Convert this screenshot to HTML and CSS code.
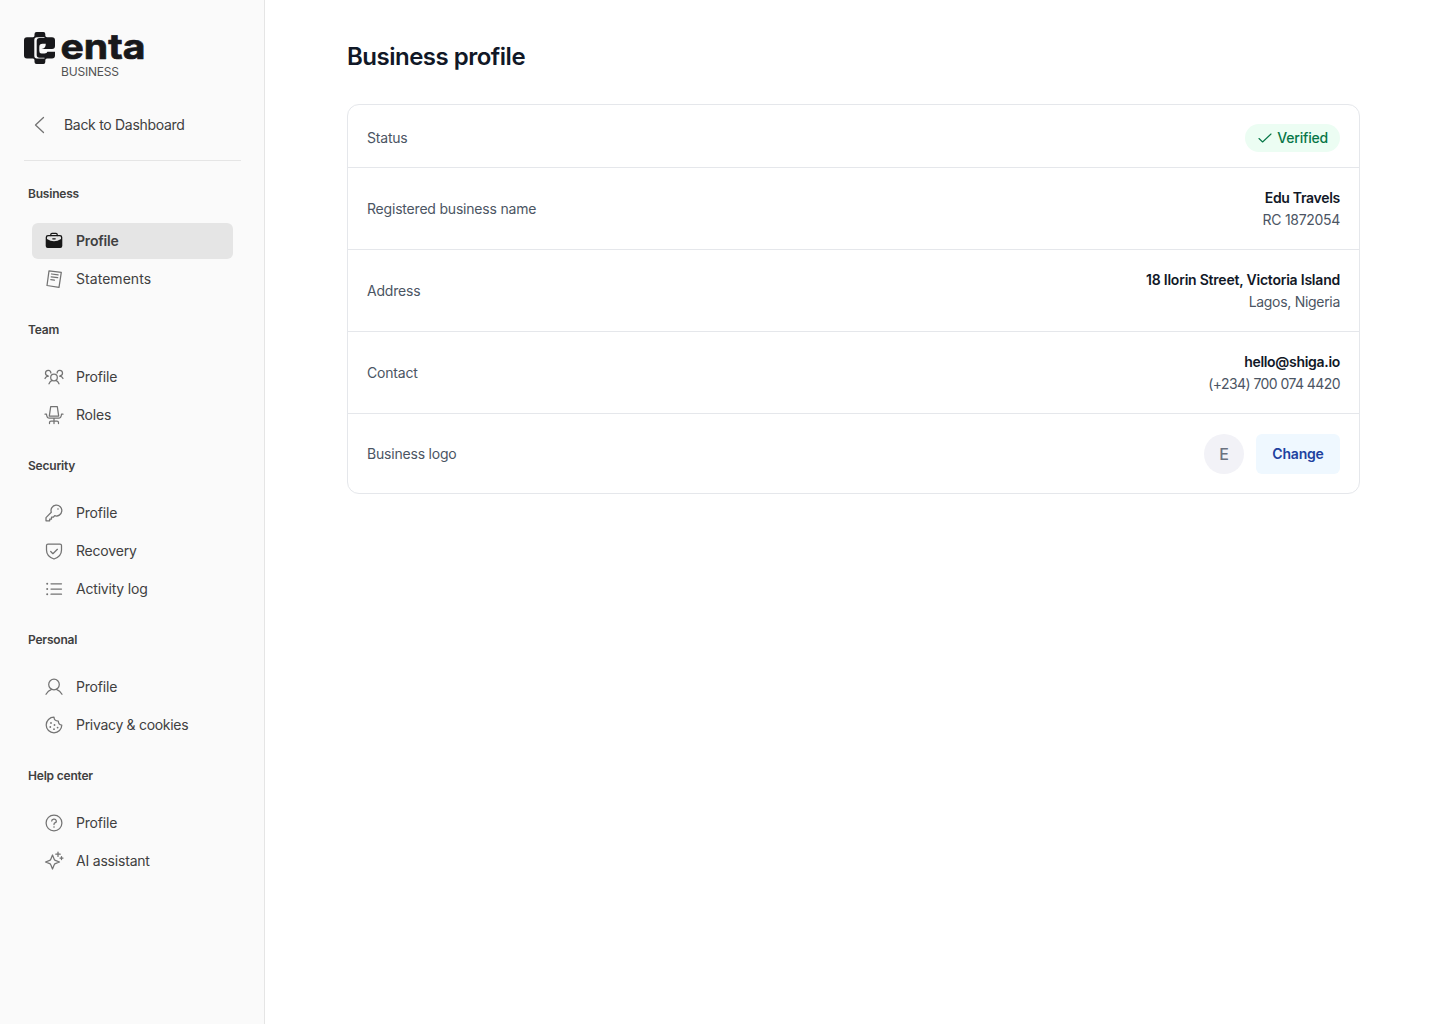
FILE: index.html
```
<!DOCTYPE html>
<html lang="en">
<head>
    <meta charset="UTF-8">
    <meta name="viewport" content="width=device-width, initial-scale=1.0">
    <title>Business profile</title>
    <link rel="stylesheet" href="styles.css">
</head>
<body>

    <div class="layout">
        <!-- Sidebar -->
        <aside class="sidebar">
            <div class="logo">
                <svg width="122" height="34" viewBox="0 0 122 34">
                    <path class="mark" d="M12.500 1H19.500Q21.300 1 21.300 3V4.500Q21.300 6.300 23 6.300H28Q31 6.300 31 9.300V15Q31 18 28 18H19.500V20.500H31V24.500Q31 27.500 28 27.500H23Q21.300 27.500 21.300 29.300V31Q21.300 33 19.500 33H12.500Q10.500 33 10.500 31V29.300Q10.500 27.500 9 27.500H3Q0 27.500 0 24.500V9.300Q0 6.300 3 6.300H9Q10.500 6.300 10.500 4.500V3Q10.500 1 12.500 1Z"/>
                    <path class="mark-hole" d="M20.500 6.300H13Q10.300 6.300 10.300 9V24.800Q10.300 27.500 13 27.500H20.500V26.700H15.500Q12.700 26.700 12.700 24V10Q12.700 7.100 15.500 7.100H20.500Z"/>
                    <path class="mark-hole" d="M15.300 17.900V16Q15.300 12.800 18.500 12.800H21.800Q21.800 17.900 17.500 17.900H31V20.400H23.500Q23 22.500 20.500 22.500H17.500Q15.300 22.500 15.300 20Z"/>
                    <text class="logo-text" x="36.500" y="28" textLength="85" lengthAdjust="spacingAndGlyphs">enta</text>
                </svg>
                <span class="logo-sub">BUSINESS</span>
            </div>

            <a class="back-link">
                <svg class="back-icon" width="12" height="18" viewBox="0 0 12 18"><path d="M9.500 1.500L1.500 9l8 7.500"/></svg>
                <span>Back to Dashboard</span>
            </a>

            <!-- Navigation -->
            <nav>
                <div class="nav-group">
                    <h2>Business</h2>
                    <a class="nav-item active">
                        <svg class="icon" viewBox="0 0 20 20"><path d="M6.800 4.500V3.600Q6.800 2.400 8 2.400H12Q13.200 2.400 13.200 3.600V4.500"/><path class="solid" fill-rule="evenodd" d="M4 4H16Q18.300 4 18.300 6.300V15Q18.300 17 16.300 17H3.700Q1.700 17 1.700 15V6.300Q1.700 4 4 4ZM3 6.600V8Q10 12.600 17 8V6.600Q17 5.200 15.500 5.200H4.500Q3 5.200 3 6.600Z"/><path d="M8.800 7.800h2.400"/></svg>
                        <span>Profile</span>
                    </a>
                    <a class="nav-item wide-text">
                        <svg class="icon" viewBox="0 0 20 20"><path d="M5 1.800L17.300 3.300L15 18.300L3 16.500ZM7.600 5l6.500.8M7.200 7.800l6.500.8M6.800 10.600l3.600.5"/></svg>
                        <span>Statements</span>
                    </a>
                </div>

                <div class="nav-group">
                    <h2>Team</h2>
                    <a class="nav-item">
                        <svg class="icon" viewBox="0 0 20 20"><circle cx="10" cy="10.500" r="3.300"/><path d="M5 16.800Q6 13.800 8.400 13.400M15 16.800Q14 13.800 11.600 13.400M6.900 6A2.700 2.700 0 1 0 3.500 8.700M4.500 9Q2 9 1 11.500M13.100 6A2.700 2.700 0 1 1 16.500 8.700M15.500 9Q18 9 19 11.500"/></svg>
                        <span>Profile</span>
                    </a>
                    <a class="nav-item">
                        <svg class="icon" viewBox="0 0 20 20"><path d="M6.700 1.700H13.300L14.700 11.200H5.300ZM1 9.200H2.500Q2.800 13.200 5.500 13.200H14.500Q17.200 13.200 17.500 9.200H19M10 13.200V18.500M5.500 18.500V17.500Q5.500 16 7 16H13Q14.500 16 14.500 17.500V18.500"/></svg>
                        <span>Roles</span>
                    </a>
                </div>

                <div class="nav-group">
                    <h2>Security</h2>
                    <a class="nav-item">
                        <svg class="icon" viewBox="0 0 20 20"><path d="M7.300 9.300A5.400 5.400 0 1 1 10.700 12.700L9.500 14H7.500V16H5.700V17.800H2V14.600Z"/><circle class="solid" cx="14" cy="6" r=".8"/></svg>
                        <span>Profile</span>
                    </a>
                    <a class="nav-item">
                        <svg class="icon" viewBox="0 0 20 20"><path d="M4 3H16Q17.500 3 17.500 4.500V9Q17.500 15.500 10 18Q2.500 15.500 2.500 9V4.500Q2.500 3 4 3ZM6.700 10.500l2.200 2.200 4.500-4.400"/></svg>
                        <span>Recovery</span>
                    </a>
                    <a class="nav-item">
                        <svg class="icon" viewBox="0 0 20 20"><path d="M7 4.800H17.500M7 10H17.500M7 15.200H17.500"/><circle class="solid" cx="3.200" cy="4.800" r="1"/><circle class="solid" cx="3.200" cy="10" r="1"/><circle class="solid" cx="3.200" cy="15.200" r="1"/></svg>
                        <span>Activity log</span>
                    </a>
                </div>

                <div class="nav-group">
                    <h2>Personal</h2>
                    <a class="nav-item">
                        <svg class="icon" viewBox="0 0 20 20"><circle cx="10" cy="7.500" r="5.300"/><path d="M2 17.300Q4 13.500 7.600 12.400M18 17.300Q16 13.500 12.400 12.400"/></svg>
                        <span>Profile</span>
                    </a>
                    <a class="nav-item tight-text">
                        <svg class="icon" viewBox="0 0 20 20"><path d="M10 2.200A7.800 7.800 0 1 0 17.800 10Q14.500 10 14.300 6Q10.200 6 10 2.200Z"/><circle class="solid" cx="7" cy="8" r=".9"/><circle class="solid" cx="10.500" cy="10" r=".9"/><circle class="solid" cx="6.300" cy="12" r=".9"/><circle class="solid" cx="10" cy="14.200" r=".9"/><circle class="solid" cx="13.600" cy="12.600" r=".9"/></svg>
                        <span>Privacy &amp; cookies</span>
                    </a>
                </div>

                <div class="nav-group">
                    <h2>Help center</h2>
                    <a class="nav-item">
                        <svg class="icon" viewBox="0 0 20 20"><circle cx="10" cy="10" r="7.900"/><path d="M7.700 8A2.300 2 0 1 1 10.800 9.900Q10 10.300 10 11.500"/><circle class="solid" cx="10" cy="14" r=".8"/></svg>
                        <span>Profile</span>
                    </a>
                    <a class="nav-item">
                        <svg class="icon" viewBox="0 0 20 20"><path d="M8.500 4L10.200 8.200Q10.500 9 11.300 9.300L15.500 11L11.300 12.700Q10.500 13 10.200 13.800L8.500 18L6.800 13.800Q6.500 13 5.700 12.700L1.500 11L5.700 9.300Q6.500 9 6.800 8.200ZM14 1V5.400M11.800 3.200H16.200M17.500 5.500V8.500M16 7H19"/></svg>
                        <span>AI assistant</span>
                    </a>
                </div>
            </nav>
        </aside>

        <!-- Main content -->
        <main class="content">
            <h1>Business profile</h1>

            <div class="card">
                <div class="row row-status">
                    <span class="label">Status</span>
                    <span class="badge">
                        <svg width="14" height="10" viewBox="0 0 14 10"><path d="M1 5.500l3.600 3.500L13 1"/></svg>
                        <span>Verified</span>
                    </span>
                </div>
                <div class="row">
                    <span class="label">Registered business name</span>
                    <div class="value">
                        <strong>Edu Travels</strong>
                        <span>RC 1872054</span>
                    </div>
                </div>
                <div class="row">
                    <span class="label">Address</span>
                    <div class="value">
                        <strong class="street">18 Ilorin Street, Victoria Island</strong>
                        <span>Lagos, Nigeria</span>
                    </div>
                </div>
                <div class="row">
                    <span class="label">Contact</span>
                    <div class="value">
                        <strong>hello@shiga.io</strong>
                        <span class="phone">(+234) 700 074 4420</span>
                    </div>
                </div>
                <div class="row row-logo">
                    <span class="label">Business logo</span>
                    <div class="logo-actions">
                        <span class="avatar">E</span>
                        <button class="change-btn">Change</button>
                    </div>
                </div>
            </div>
        </main>
    </div>

</body>
</html>
```

FILE: styles.css
```
/* Base */
* {
    box-sizing: border-box;
}
body {
    margin: 0;
    font-family: Inter, "Liberation Sans", sans-serif;
    font-size: 14px;
    letter-spacing: -0.2px;
    color: #404040;
    background-color: #fff;
}
svg {
    fill: none;
    stroke-linecap: round;
    stroke-linejoin: round;
    flex-shrink: 0;
}
.layout {
    display: flex;
    min-height: 100vh;
}

/* Sidebar */
.sidebar {
    width: 265px;
    flex-shrink: 0;
    padding: 31px 23px 24px 24px;
    background-color: #fafafa;
    border-right: 1px solid #e5e5e5;
}
.logo {
    display: flex;
    flex-direction: column;
}
.logo svg {
    overflow: visible;
}
.mark {
    fill: #18181b;
}
.mark-hole {
    fill: #fafafa;
}
.logo-text {
    font-size: 35px;
    font-weight: 700;
    letter-spacing: 0;
    fill: #18181b;
    stroke: #18181b;
    stroke-width: 0.7;
}
.logo-sub {
    padding-left: 37px;
    font-size: 12px;
    line-height: 14px;
    letter-spacing: -0.2px;
    color: #525252;
}
.back-link {
    display: flex;
    align-items: center;
    gap: 18px;
    height: 82px;
    padding: 11px 0 0 10px;
    margin-bottom: 25px;
    border-bottom: 1px solid #e5e5e5;
    letter-spacing: -0.3px;
}
.back-icon {
    stroke: #737373;
    stroke-width: 1.3;
}
.back-link span,
.nav-item span,
.row-status span span,
.row-status .label {
    padding-bottom: 2px;
}

/* Navigation */
.nav-group {
    margin-bottom: 25px;
}
.nav-group h2 {
    margin: 0 0 21px 4px;
    font-size: 12px;
    line-height: 16px;
    font-weight: 600;
}
.nav-item {
    display: flex;
    align-items: center;
    gap: 12px;
    height: 36px;
    margin: 0 8px 2px;
    padding: 0 12px;
    border-radius: 6px;
}
.nav-item:last-child {
    margin-bottom: 0;
}
.nav-item.active {
    background-color: #e5e5e5;
    font-weight: 600;
}
.wide-text {
    letter-spacing: 0.05px;
}
.tight-text {
    letter-spacing: -0.3px;
}
.icon {
    width: 20px;
    height: 20px;
    stroke: #737373;
    stroke-width: 1.25;
}
.icon .solid {
    fill: #737373;
    stroke: none;
}
.active .icon {
    stroke: #171717;
}
.active .icon .solid {
    fill: #171717;
}

/* Content */
.content {
    flex: 1;
    padding: 41px 80px 40px 82px;
}
h1 {
    margin: 0 0 31px;
    font-size: 24px;
    line-height: 32px;
    font-weight: 600;
    letter-spacing: -0.5px;
    color: #111827;
}
.card {
    border: 1px solid #e5e7eb;
    border-radius: 12px;
}
.row {
    display: flex;
    align-items: center;
    justify-content: space-between;
    height: 82px;
    padding: 0 19px;
    border-bottom: 1px solid #e5e7eb;
}
.row-status {
    height: 63px;
    padding-top: 4px;
}
.row-logo {
    height: 79px;
    border-bottom: none;
}
.label {
    color: #4b5563;
}
.value {
    display: flex;
    flex-direction: column;
    align-items: flex-end;
    line-height: 22px;
    letter-spacing: -0.3px;
    color: #4b5563;
}
.value strong {
    font-weight: 600;
    color: #111827;
}
.value .street {
    letter-spacing: -0.22px;
}
.value .phone {
    letter-spacing: -0.57px;
}
.badge {
    display: flex;
    align-items: center;
    gap: 5px;
    height: 28px;
    padding: 0 12px 0 13px;
    border-radius: 14px;
    background-color: #ecfdf3;
    color: #067647;
    font-weight: 500;
}
.badge svg {
    stroke: #067647;
    stroke-width: 1.1;
}
.logo-actions {
    display: flex;
    gap: 12px;
}
.avatar {
    width: 40px;
    height: 40px;
    border-radius: 50%;
    background-color: #f2f2f7;
    color: #6b7280;
    font-size: 16px;
    font-weight: 500;
    line-height: 40px;
    text-align: center;
}
.change-btn {
    width: 84px;
    height: 40px;
    padding: 0;
    border: none;
    border-radius: 6px;
    background-color: #eff8ff;
    color: #1e429f;
    font-family: inherit;
    font-size: 14px;
    font-weight: 600;
    letter-spacing: -0.2px;
}
```
